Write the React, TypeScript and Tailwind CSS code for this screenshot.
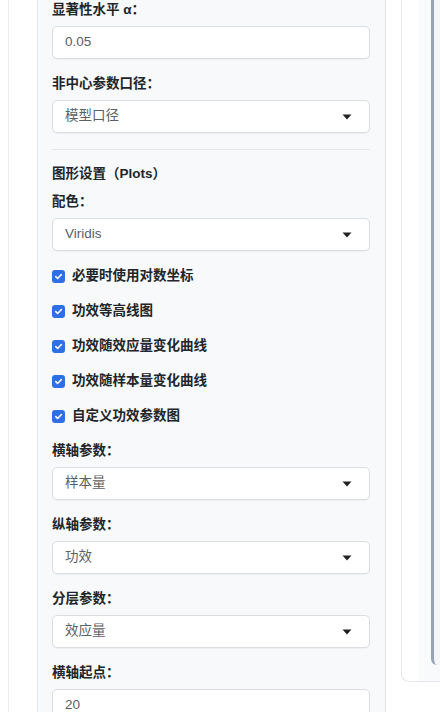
function Caret() {
  return (
    <svg width="10" height="6" viewBox="0 0 10 6" className="shrink-0">
      <path d="M0.5 0.5h9L5 5.5z" fill="#222" />
    </svg>
  )
}

function Label({ children }: { children: React.ReactNode }) {
  return <div className="text-[13.5px] leading-[18px] font-bold text-[#212529] mb-[7px]">{children}</div>
}

function TextInput({ label, value }: { label: string; value: string }) {
  return (
    <div className="mb-[16px]">
      <Label>{label}</Label>
      <div className="h-[33px] bg-white border border-[#dadee3] rounded-[5px] shadow-[0_1px_1px_rgba(0,0,0,0.04)] flex items-center px-[12px] text-[13.5px] text-[#5b6066]">
        {value}
      </div>
    </div>
  )
}

function Select({ label, value }: { label: string; value: string }) {
  return (
    <div className="mb-[16px]">
      <Label>{label}</Label>
      <div className="h-[33px] bg-white border border-[#dadee3] rounded-[5px] shadow-[0_1px_1px_rgba(0,0,0,0.04)] flex items-center justify-between pl-[12px] pr-[17px] text-[13.5px] text-[#5b6066]">
        <span>{value}</span>
        <Caret />
      </div>
    </div>
  )
}

function Check({ label }: { label: string }) {
  return (
    <div className="flex items-center gap-[7px] h-[18px] mb-[17px]">
      <span className="w-[13px] h-[13px] rounded-[3px] bg-[#2f6fe6] flex items-center justify-center">
        <svg width="9" height="9" viewBox="0 0 10 10">
          <path d="M2 5.2l2 2L8.2 2.8" fill="none" stroke="#fff" strokeWidth="1.8" strokeLinecap="round" strokeLinejoin="round" />
        </svg>
      </span>
      <span className="text-[13.5px] leading-[18px] font-semibold text-[#212529]">{label}</span>
    </div>
  )
}

export default function App() {
  return (
    <div
      className="w-[440px] h-[712px] overflow-hidden bg-white flex"
      style={{ fontFamily: '"Liberation Sans", "Noto Sans CJK SC", sans-serif' }}
    >
      <div className="w-[8px] shrink-0" />
      <div className="border-l border-[#eceef1] pl-[28px] shrink-0 flex">
        <aside className="w-[349px] h-[760px] bg-[#f8f9fb] border-x border-[#e1e4e8] pl-[14px] pr-[15px] pt-[1px]">
          <TextInput label="显著性水平 α：" value="0.05" />
          <Select label="非中心参数口径：" value="模型口径" />
          <hr className="border-t border-[#e3e6ea] mb-[15px]" />
          <div className="text-[13.5px] leading-[18px] font-semibold text-[#212529] mb-[10px]">图形设置（Plots）</div>
          <Select label="配色：" value="Viridis" />
          <Check label="必要时使用对数坐标" />
          <Check label="功效等高线图" />
          <Check label="功效随效应量变化曲线" />
          <Check label="功效随样本量变化曲线" />
          <Check label="自定义功效参数图" />
          <Select label="横轴参数：" value="样本量" />
          <Select label="纵轴参数：" value="功效" />
          <Select label="分层参数：" value="效应量" />
          <TextInput label="横轴起点：" value="20" />
        </aside>
      </div>
      <div className="ml-[15px] flex-1 h-[682px] border-l border-b border-[#e3e6ea] rounded-bl-[8px] pl-[17px] shrink-0">
        <div className="h-full bg-[#f9fafc] pl-[12px] pb-[16px]">
          <div className="h-full border-l-[3px] border-[#9aa3b3] rounded-bl-[6px] bg-[#f3f5f8]" />
        </div>
      </div>
    </div>
  )
}
